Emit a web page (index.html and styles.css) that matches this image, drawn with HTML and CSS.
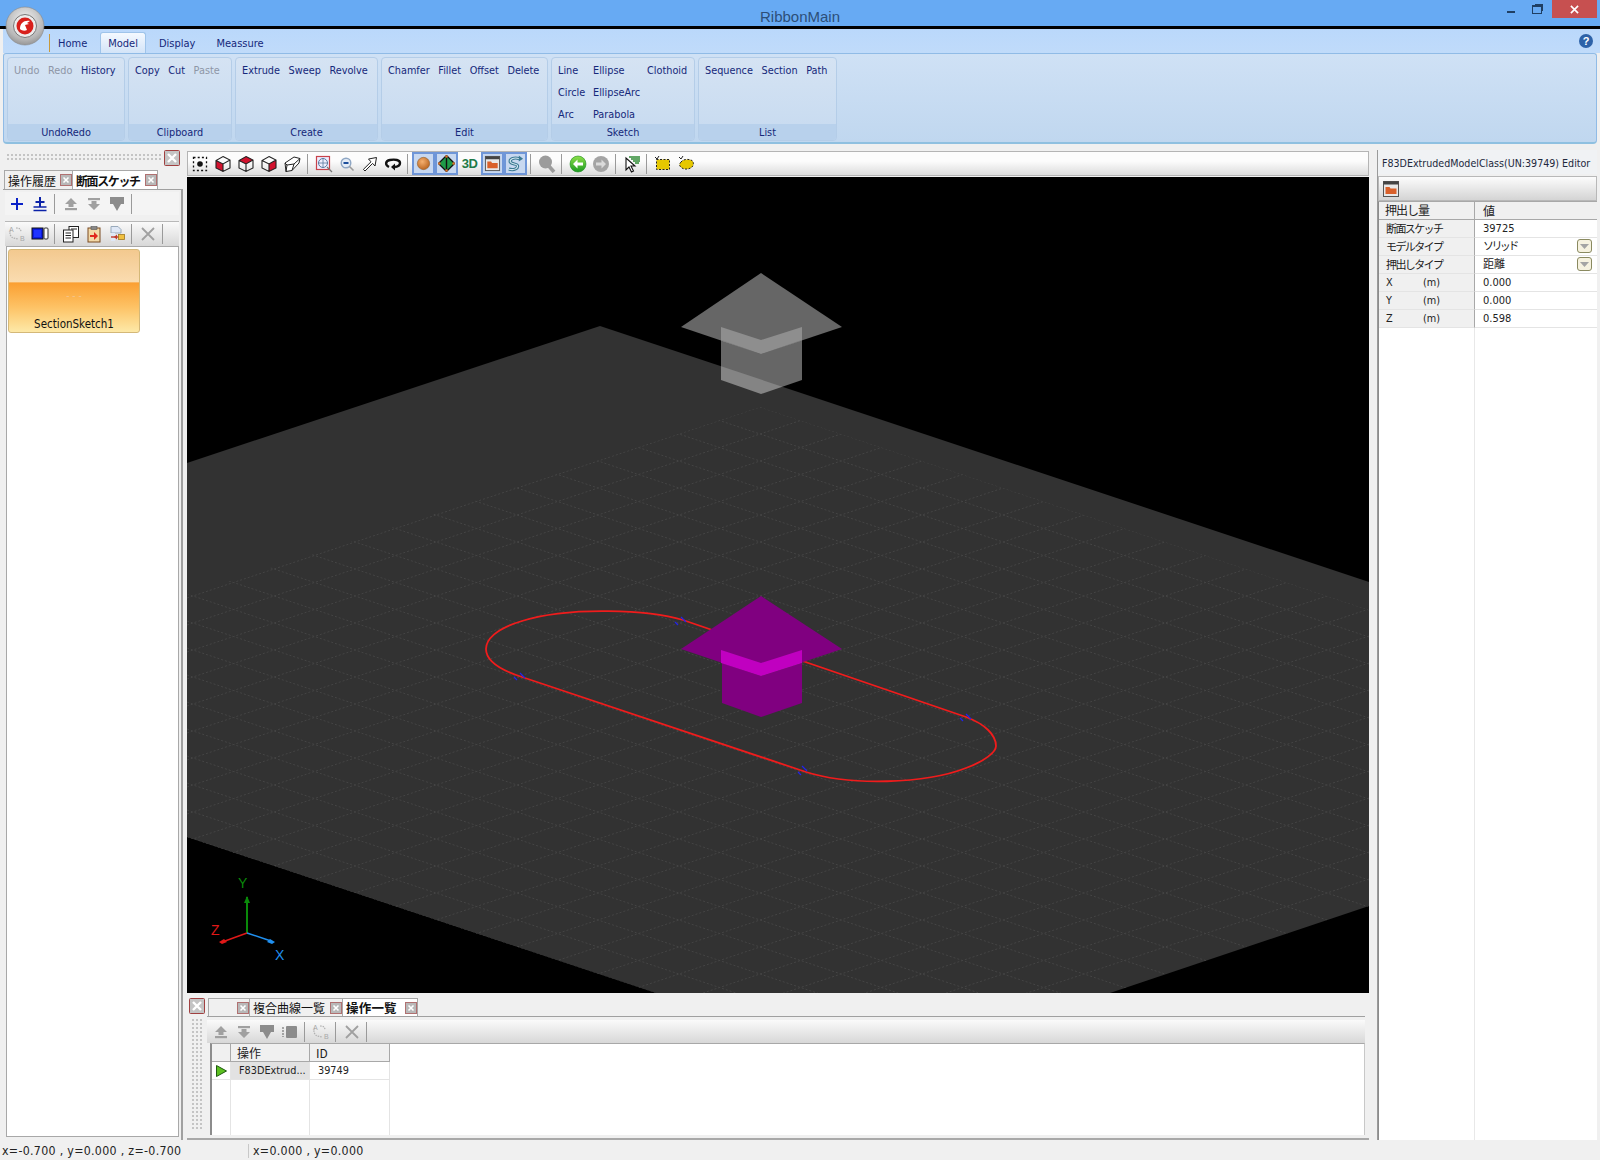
FILE: index.html
```html
<!DOCTYPE html>
<html lang="en">
<head>
  <meta charset="UTF-8" />
  <title>RibbonMain</title>
  <link rel="stylesheet" href="styles.css">
</head>
<body>
  <svg class="defs" xmlns="http://www.w3.org/2000/svg">
    <defs>
      <radialGradient id="ball" cx="0.4" cy="0.35" r="0.7"><stop offset="0" stop-color="#f5b070"/><stop offset="1" stop-color="#b8621c"/></radialGradient>
      <radialGradient id="chrome" cx="0.5" cy="0.35" r="0.7"><stop offset="0" stop-color="#f4f4f4"/><stop offset="0.7" stop-color="#b8b8b8"/><stop offset="1" stop-color="#8c8c8c"/></radialGradient>
      <linearGradient id="greenball" x1="0" y1="0" x2="0" y2="1"><stop offset="0" stop-color="#8ee04a"/><stop offset="1" stop-color="#1a9a20"/></linearGradient>
    </defs>
    <symbol id="i-select" viewBox="0 0 18 18"><rect x="2.5" y="2.5" width="13" height="13" fill="none" stroke="#111" stroke-width="1.3" stroke-dasharray="2 2.2"/><circle cx="9" cy="9" r="2.8" fill="#111"/></symbol>
    <symbol id="i-cube-l" viewBox="0 0 18 18"><path d="M2 5.5 9 9v7.5L2 13z" fill="#d2122e"/><path d="M9 1.5 16 5v8l-7 3.5L2 13V5.5zM2 5.5 9 9l7-4M9 9v7.5" fill="none" stroke="#222" stroke-width="1.1"/></symbol>
    <symbol id="i-cube-t" viewBox="0 0 18 18"><path d="M9 1.5 16 5 9 9 2 5.5z" fill="#d2122e"/><path d="M9 1.5 16 5v8l-7 3.5L2 13V5.5zM2 5.5 9 9l7-4M9 9v7.5" fill="none" stroke="#222" stroke-width="1.1"/></symbol>
    <symbol id="i-cube-r" viewBox="0 0 18 18"><path d="M16 5v8l-7 3.5V9z" fill="#d2122e"/><path d="M9 1.5 16 5v8l-7 3.5L2 13V5.5zM2 5.5 9 9l7-4M9 9v7.5" fill="none" stroke="#222" stroke-width="1.1"/></symbol>
    <symbol id="i-box" viewBox="0 0 18 18"><path d="M2 8 11 2l6 1.500-1 4.500-7 7.500-6 1z" fill="#fff" stroke="#222" stroke-width="1"/><path d="M2 8l2 2 7-1 6-5.500M4 10l-1 7M11 9l-2 6.500" fill="none" stroke="#222" stroke-width="1"/></symbol>
    <symbol id="i-zoombox" viewBox="0 0 18 18"><rect x="1.5" y="1.5" width="13" height="13" fill="#eef" stroke="#c8424a" stroke-width="1.2"/><circle cx="8" cy="8" r="4.5" fill="none" stroke="#5a7aa0"/><path d="M8 3v10M3 8h10" stroke="#5a7aa0" stroke-width=".8"/><path d="m12 12 5 5" stroke="#777" stroke-width="1.2"/></symbol>
    <symbol id="i-zoomout" viewBox="0 0 18 18"><circle cx="8" cy="8" r="4.8" fill="#e4ecf6" stroke="#8ea6c4" stroke-width="1.4"/><path d="M5.5 8h5" stroke="#1d4f9c" stroke-width="2"/><path d="m11.5 11.5 4 4" stroke="#9a9a9a" stroke-width="1.6"/></symbol>
    <symbol id="i-arrow" viewBox="0 0 18 18"><path d="M15.5 2.5 14 11l-2.4-2.6L4 16l-1.6-1.6L10 6.8 7.5 4z" fill="#fff" stroke="#222"/></symbol>
    <symbol id="i-rotate" viewBox="0 0 18 18"><path d="M5 12C1 10 1 6 6 5c5-1 10 0 10 3 0 2-2 3.500-5 4" fill="none" stroke="#111" stroke-width="2.400"/><path d="m11 8.500 0 7-4-3.500z" fill="#111"/></symbol>
    <symbol id="i-sphere" viewBox="0 0 18 18"><circle cx="9" cy="9" r="6.500" fill="url(#ball)" stroke="#8a5a2a" stroke-width=".6"/></symbol>
    <symbol id="i-diamond" viewBox="0 0 18 18"><path d="M9 .5 17.500 9 9 17.500.5 9z" fill="#1f9a48" stroke="#111" stroke-width="1.300"/><path d="M9 1v16" stroke="#111" stroke-width="1.500"/><circle cx="9" cy="1.500" r="1.300" fill="#e0742a"/><circle cx="16.500" cy="9" r="1.300" fill="#e0742a"/><circle cx="1.500" cy="9" r="1.300" fill="#e0742a"/><circle cx="9" cy="16.500" r="1.300" fill="#e0742a"/></symbol>
    <symbol id="i-folder" viewBox="0 0 18 18"><rect x="1.500" y="1.500" width="15" height="15" fill="#e8e8e8" stroke="#555"/><rect x="1.500" y="1.500" width="15" height="3" fill="#444"/><path d="M3.500 14V7h4l1 1.500h6V14z" fill="#d9602a"/></symbol>
    <symbol id="i-curve" viewBox="0 0 18 18"><path d="M2 15c6 1.500 10-1 9-4-.8-2-6-1-7.500-3.500C2.500 4 8 2 13 4" fill="none" stroke="#3c7a94" stroke-width="3.400"/><path d="M2 15c6 1.500 10-1 9-4-.8-2-6-1-7.500-3.500C2.500 4 8 2 13 4" fill="none" stroke="#d4e8f0" stroke-width="1.100"/><path d="m12.500 .5 4.500 3.500-4.500 3z" fill="#3c7a94"/></symbol>
    <symbol id="i-magnify" viewBox="0 0 18 18"><circle cx="7.500" cy="7" r="6.500" fill="#9c9c9c"/><path d="m10 10 6 7" stroke="#9c9c9c" stroke-width="3.600"/></symbol>
    <symbol id="i-back" viewBox="0 0 18 18"><circle cx="9" cy="9" r="8" fill="url(#greenball)" stroke="#1c8a20" stroke-width=".6"/><path d="M4 9l4.500-4.500V7.500H14v3H8.500v3z" fill="#fff"/></symbol>
    <symbol id="i-forward" viewBox="0 0 18 18"><circle cx="9" cy="9" r="8" fill="#a4a4a4"/><path d="M14 9 9.500 4.500V7.500H4v3h5.500v3z" fill="#dadada"/></symbol>
    <symbol id="i-cursor" viewBox="0 0 18 18"><path d="M3 3v12l3-3 2.500 5 2-1L8 11h4z" fill="#fff" stroke="#111" stroke-width="1.100"/><path d="M6 2h11M8 4h9M10 6h7M12 8h4" stroke="#2f8a34" stroke-width="1.300"/></symbol>
    <symbol id="i-rect" viewBox="0 0 18 18"><rect x="2.500" y="4.500" width="13" height="10" fill="#e6c800" stroke="#222" stroke-dasharray="2 1.500"/><path d="M1 2l2 2 2-3" fill="none" stroke="#222"/></symbol>
    <symbol id="i-blob" viewBox="0 0 18 18"><path d="M4 7c2-3 7-3 10-2s3 5 1 7-7 3-10 1-3-4-1-6z" fill="#e6c800" stroke="#222" stroke-dasharray="2 1.500"/><path d="M2 2l2 2 2-3" fill="none" stroke="#222"/></symbol>
    <symbol id="i-plus" viewBox="0 0 18 18"><path d="M9 3v12M3 9h12" stroke="#0b22c8" stroke-width="2"/></symbol>
    <symbol id="i-plusdown" viewBox="0 0 18 18"><path d="M9 2v10M4.500 7h9" stroke="#0b22a8" stroke-width="2"/><path d="M2.500 12h13M2.500 15.500h13" stroke="#0b22a8" stroke-width="1.600"/></symbol>
    <symbol id="i-up" viewBox="0 0 18 18"><path d="M9 3 15 9h-3.500v3h-5V9H3z" fill="#a0a0a0"/><rect x="3" y="13" width="12" height="2.200" fill="#a0a0a0"/></symbol>
    <symbol id="i-down" viewBox="0 0 18 18"><rect x="3" y="3" width="12" height="2.200" fill="#a0a0a0"/><path d="M9 15 15 9h-3.500V6h-5v3H3z" fill="#a0a0a0"/></symbol>
    <symbol id="i-bulk" viewBox="0 0 18 18"><path d="M2 2h14v7h-3l-4 7-4-7H2z" fill="#8c8c8c"/></symbol>
    <symbol id="i-stack" viewBox="0 0 18 18"><rect x="5" y="3" width="11" height="12" rx="1" fill="#8c8c8c"/><path d="M2 4v10" stroke="#8c8c8c" stroke-width="1.500" stroke-dasharray="2 1"/></symbol>
    <symbol id="i-bluebox" viewBox="0 0 18 18"><rect x="1" y="3" width="11" height="11" fill="#0c1ce0" stroke="#111"/><rect x="3" y="5" width="7" height="7" fill="#1f34ff"/><rect x="13" y="3" width="4" height="11" rx="1" fill="#fff" stroke="#333"/></symbol>
    <symbol id="i-copy" viewBox="0 0 18 18"><rect x="7" y="1.500" width="9.500" height="11" fill="#fff" stroke="#222"/><rect x="1.500" y="5" width="9.500" height="12" fill="#fff" stroke="#222"/><path d="M3.500 8h5.500M3.500 10.500h5.500M3.500 13h5.500M9 4h6" stroke="#222"/></symbol>
    <symbol id="i-paste" viewBox="0 0 18 18"><rect x="3" y="3" width="12" height="14" fill="#f2d9a8" stroke="#7a4a20"/><rect x="6" y="1.500" width="6" height="3" fill="#888" stroke="#555" stroke-width=".6"/><path d="M5 10h4V7l4 4-4 4v-3H5z" fill="#e0281e"/></symbol>
    <symbol id="i-pastefile" viewBox="0 0 18 18"><path d="M3 1.500h7l3 3V8H3z" fill="#dfe8f6" stroke="#9ab"/><rect x="3" y="8" width="4" height="8" fill="#dfe8f6"/><path d="M3 12h8" stroke="#c0392b" stroke-width="1.400"/><path d="M9 9.500 6 12l3 2.500" fill="#c0392b"/><rect x="10.500" y="9.500" width="6" height="5" fill="#f0c040" stroke="#a07820" stroke-width=".8"/></symbol>
    <symbol id="i-x" viewBox="0 0 18 18"><path d="M3 3 15 15M15 3 3 15" stroke="#a0a0a0" stroke-width="1.800"/></symbol>
    <symbol id="i-close" viewBox="0 0 16 16"><rect x=".5" y=".5" width="15" height="15" rx="1" fill="#c4c4c4" stroke="#a04040"/><path d="M4 4l8 8M12 4l-8 8" stroke="#fff" stroke-width="2.400"/></symbol>
    <symbol id="i-tabx" viewBox="0 0 12 12"><rect x=".5" y=".5" width="11" height="11" fill="#b8b8b8" stroke="#b07070"/><path d="M3.500 3.500l5 5M8.500 3.500l-5 5" stroke="#fff" stroke-width="1.600"/></symbol>
    <symbol id="i-play" viewBox="0 0 14 14"><path d="M2.500 1.500 12.500 7 2.500 12.500z" fill="#5cc020" stroke="#1e5a10"/></symbol>
    <symbol id="i-drop" viewBox="0 0 15 14"><rect x=".5" y=".5" width="14" height="13" rx="2.500" fill="#f6f2e0" stroke="#8a8a60"/><path d="M3 5h9L7.500 10z" fill="#a4a4a4"/></symbol>
    <symbol id="i-sort" viewBox="0 0 18 18"><path d="M3 5c-2 3-1 6 2 8l5 1M8 3c3 0 5 1 5 4" fill="none" stroke="#b0b0b0" stroke-width="1.200" stroke-dasharray="1.500 1"/></symbol>
  </svg>

  <header class="titlebar">
    <span class="title">RibbonMain</span>
    <div class="winbtns">
      <span class="win-min"></span>
      <span class="win-max"></span>
      <span class="win-close"><svg viewBox="0 0 10 10"><path d="M1 1l8 8M9 1 1 9" stroke="#fff" stroke-width="1.800"/></svg></span>
    </div>
  </header>
  <div class="logo"><svg viewBox="0 0 40 40"><circle cx="20" cy="20" r="19" fill="url(#chrome)" stroke="#888" stroke-width=".6"/><circle cx="20" cy="20" r="11.500" fill="#ececec" stroke="#777"/><circle cx="20" cy="20" r="8.500" fill="#d8201c"/><path d="M15 23c0-6 4-9 10-8l-3 2 2 1-4 1 2 5c-2 1-5 1-7-1z" fill="#fff"/></svg></div>

  <nav class="tabbar">
    <span class="tab-mark"></span>
    <span class="rtab">Home</span>
    <span class="rtab active">Model</span>
    <span class="rtab">Display</span>
    <span class="rtab">Meassure</span>
    <span class="help">?</span>
  </nav>

  <section class="ribbon">
    <div class="group g-undo">
      <div class="items"><span class="off">Undo</span><span class="off">Redo</span><span>History</span></div>
      <div class="caption">UndoRedo</div>
    </div>
    <div class="group g-clip">
      <div class="items"><span>Copy</span><span>Cut</span><span class="off">Paste</span></div>
      <div class="caption">Clipboard</div>
    </div>
    <div class="group g-create">
      <div class="items"><span>Extrude</span><span>Sweep</span><span>Revolve</span></div>
      <div class="caption">Create</div>
    </div>
    <div class="group g-edit">
      <div class="items"><span>Chamfer</span><span>Fillet</span><span>Offset</span><span>Delete</span></div>
      <div class="caption">Edit</div>
    </div>
    <div class="group g-sketch">
      <div class="items sketch-items">
        <span>Line</span><span>Ellipse</span><span>Clothoid</span>
        <span>Circle</span><span>EllipseArc</span><span></span>
        <span>Arc</span><span>Parabola</span><span></span>
      </div>
      <div class="caption">Sketch</div>
    </div>
    <div class="group g-list">
      <div class="items"><span>Sequence</span><span>Section</span><span>Path</span></div>
      <div class="caption">List</div>
    </div>
  </section>

  <div class="workspace">
    <aside class="left">
      <div class="left-head">
        <div class="gripper"></div>
        <svg class="close-btn"><use href="#i-close"/></svg>
      </div>
      <div class="dock-tabs">
        <span class="dock-tab t-hist">操作履歴<svg class="tabx"><use href="#i-tabx"/></svg></span>
        <span class="dock-tab active t-sect"><b>断面スケッチ</b><svg class="tabx"><use href="#i-tabx"/></svg></span>
      </div>
      <div class="left-body">
        <div class="toolbar plain">
          <button class="tb"><svg><use href="#i-plus"/></svg></button>
          <button class="tb"><svg><use href="#i-plusdown"/></svg></button>
          <i class="sep"></i>
          <button class="tb"><svg><use href="#i-up"/></svg></button>
          <button class="tb"><svg><use href="#i-down"/></svg></button>
          <button class="tb"><svg><use href="#i-bulk"/></svg></button>
          <i class="sep"></i>
        </div>
        <div class="toolbar second">
          <button class="tb"><svg viewBox="0 0 18 18"><use href="#i-sort"/><text x="1" y="7" class="sort-text">A</text><text x="12" y="16" class="sort-text">B</text></svg></button>
          <button class="tb"><svg><use href="#i-bluebox"/></svg></button>
          <i class="sep"></i>
          <button class="tb"><svg><use href="#i-copy"/></svg></button>
          <button class="tb"><svg><use href="#i-paste"/></svg></button>
          <button class="tb"><svg><use href="#i-pastefile"/></svg></button>
          <i class="sep"></i>
          <button class="tb"><svg><use href="#i-x"/></svg></button>
          <i class="sep"></i>
        </div>
        <div class="sketch-list">
          <div class="sketch-card">
            <span class="card-dash">- - -</span>
            <span class="card-name">SectionSketch1</span>
          </div>
        </div>
      </div>
    </aside>

    <main class="center">
      <div class="toolbar view-tools">
        <button class="tb"><svg><use href="#i-select"/></svg></button>
        <button class="tb"><svg><use href="#i-cube-l"/></svg></button>
        <button class="tb"><svg><use href="#i-cube-t"/></svg></button>
        <button class="tb"><svg><use href="#i-cube-r"/></svg></button>
        <button class="tb"><svg><use href="#i-box"/></svg></button>
        <i class="sep"></i>
        <button class="tb"><svg><use href="#i-zoombox"/></svg></button>
        <button class="tb"><svg><use href="#i-zoomout"/></svg></button>
        <button class="tb"><svg><use href="#i-arrow"/></svg></button>
        <button class="tb"><svg><use href="#i-rotate"/></svg></button>
        <i class="sep"></i>
        <button class="tb on"><svg><use href="#i-sphere"/></svg></button>
        <button class="tb on"><svg><use href="#i-diamond"/></svg></button>
        <button class="tb"><span class="threed">3D</span></button>
        <button class="tb on"><svg><use href="#i-folder"/></svg></button>
        <button class="tb on"><svg><use href="#i-curve"/></svg></button>
        <i class="sep"></i>
        <button class="tb"><svg><use href="#i-magnify"/></svg></button>
        <i class="sep"></i>
        <button class="tb"><svg><use href="#i-back"/></svg></button>
        <button class="tb"><svg><use href="#i-forward"/></svg></button>
        <i class="sep"></i>
        <button class="tb"><svg><use href="#i-cursor"/></svg></button>
        <i class="sep"></i>
        <button class="tb"><svg><use href="#i-rect"/></svg></button>
        <button class="tb"><svg><use href="#i-blob"/></svg></button>
      </div>

      <svg class="viewport" viewBox="187 177 1182 816" xmlns="http://www.w3.org/2000/svg">
        <clipPath id="gridclip"><polygon points="760,407 1369,610 1369,906 1110,993 656,993 187,837 187,595"/></clipPath>
        <rect x="187" y="177" width="1182" height="816" fill="#000"/>
        <polygon points="600,326 1369,582 1369,906 1110,993 656,993 187,837 187,463" fill="#323232"/>
        <g clip-path="url(#gridclip)" fill="none" stroke="#444" stroke-width="1" stroke-dasharray="2 2">
          <path d="M187 216l1182 394m-1182-367l1182 394m-1182-367l1182 394m-1182-367l1182 394m-1182-367l1182 394m-1182-367l1182 394m-1182-367l1182 394m-1182-367l1182 394m-1182-367l1182 394m-1182-367l1182 394m-1182-367l1182 394m-1182-367l1182 394m-1182-367l1182 394m-1182-367l1182 394m-1182-367l1182 394m-1182-367l1182 394m-1182-367l1182 394m-1182-367l1182 394m-1182-367l1182 394m-1182-367l1182 394m-1182-367l1182 394m-1182-367l1182 394m-1182-367l1182 394m-1182-367l1182 394m-1182-367l1182 394m-1182-367l1182 394m-1182-367l1182 394m-1182-367l1182 394m-1182-367l1182 394"/>
          <path d="M187 598l1182-394m-1182 421l1182-394m-1182 421l1182-394m-1182 421l1182-394m-1182 421l1182-394m-1182 421l1182-394m-1182 421l1182-394m-1182 421l1182-394m-1182 421l1182-394m-1182 421l1182-394m-1182 421l1182-394m-1182 421l1182-394m-1182 421l1182-394m-1182 421l1182-394m-1182 421l1182-394m-1182 421l1182-394m-1182 421l1182-394m-1182 421l1182-394m-1182 421l1182-394m-1182 421l1182-394m-1182 421l1182-394m-1182 421l1182-394m-1182 421l1182-394m-1182 421l1182-394m-1182 421l1182-394m-1182 421l1182-394"/>
        </g>

        <!-- ghost of the extruded shape -->
        <polygon points="761,273 842,327 761,354 681,327" fill="#fff" fill-opacity=".4"/>
        <polygon points="721,340 761,354 802,340 802,380 761,394 721,380" fill="#fff" fill-opacity=".4"/>
        <polygon points="721,327 761,340 802,327 802,340 761,354 721,340" fill="#8e8e8e"/>

        <!-- section sketch outline -->
        <path d="M683 620C650 610 570 606 522 621C495 629 486 640 486 649C486 660 497 669 522 677L806 772C850 786 925 784 966 768C985 761 996 752 996 746C996 735 985 724 966 717Z" fill="none" stroke="#f01c1c" stroke-width="1.800"/>
        <g stroke="#2222ee" stroke-width="1.200">
          <path d="M681 617l5 5M675 622l3 3"/>
          <path d="M520 673l5 5M514 677l3 3"/>
          <path d="M802 766l5 5M798 772l3 3"/>
          <path d="M966 714l5 5M960 718l3 3"/>
        </g>

        <!-- extruded shape -->
        <polygon points="761,596 842,649 761,676 681,649" fill="#800080"/>
        <polygon points="722,663 761,676 802,663 802,703 761,717 722,703" fill="#800080"/>
        <polygon points="721,650 761,663 802,650 802,663 761,676 721,663" fill="#c000c0"/>

        <!-- axes -->
        <path d="M247 933V897" stroke="#0a8a0a" stroke-width="2"/>
        <path d="M247 896l-3 7h6z" fill="#0a8a0a"/>
        <path d="M247 933l-22 8" stroke="#e01818" stroke-width="1.500"/>
        <path d="M219 942l5-3 3 3-5 2z" fill="#e01818"/>
        <path d="M247 933l24 8" stroke="#2090f0" stroke-width="1.500"/>
        <path d="M275 942l-5-3-3 3 5 2z" fill="#2090f0"/>
        <text x="238" y="888" class="axis ax-y">Y</text>
        <text x="211" y="935" class="axis ax-z">Z</text>
        <text x="275" y="960" class="axis ax-x">X</text>
      </svg>

      <div class="bottom">
        <div class="bottom-side">
          <svg class="close-btn"><use href="#i-close"/></svg>
          <div class="gripper tall"></div>
        </div>
        <div class="bottom-main">
          <div class="dock-tabs small">
            <span class="dock-tab t-blank"><svg class="tabx"><use href="#i-tabx"/></svg></span>
            <span class="dock-tab t-curve">複合曲線一覧<svg class="tabx"><use href="#i-tabx"/></svg></span>
            <span class="dock-tab active t-ops"><b>操作一覧</b><svg class="tabx"><use href="#i-tabx"/></svg></span>
          </div>
          <div class="ops-body">
            <div class="toolbar second">
              <button class="tb"><svg><use href="#i-up"/></svg></button>
              <button class="tb"><svg><use href="#i-down"/></svg></button>
              <button class="tb"><svg><use href="#i-bulk"/></svg></button>
              <button class="tb"><svg><use href="#i-stack"/></svg></button>
              <i class="sep"></i>
              <button class="tb"><svg viewBox="0 0 18 18"><use href="#i-sort"/><text x="1" y="7" class="sort-text">A</text><text x="12" y="16" class="sort-text">B</text></svg></button>
              <i class="sep"></i>
              <button class="tb"><svg><use href="#i-x"/></svg></button>
              <i class="sep"></i>
            </div>
            <div class="ops-table">
              <div class="ops-row head"><span class="c-mark"></span><span class="c-name">操作</span><span class="c-id">ID</span></div>
              <div class="ops-row"><span class="c-mark"><svg class="play"><use href="#i-play"/></svg></span><span class="c-name cell-gray">F83DExtrud...</span><span class="c-id">39749</span></div>
              <div class="ops-row fill"><span class="c-mark"></span><span class="c-name"></span><span class="c-id"></span></div>
            </div>
          </div>
        </div>
      </div>
    </main>

    <aside class="right">
      <div class="editor-head">F83DExtrudedModelClass(UN:39749) Editor</div>
      <div class="toolbar editor-tools">
        <button class="tb"><svg><use href="#i-folder"/></svg></button>
      </div>
      <div class="props">
        <div class="prop head"><span class="key">押出し量</span><span class="val">値</span></div>
        <div class="prop"><span class="key">断面スケッチ</span><span class="val">39725</span></div>
        <div class="prop"><span class="key">モデルタイプ</span><span class="val"><em>ソリッド</em><svg class="drop"><use href="#i-drop"/></svg></span></div>
        <div class="prop"><span class="key">押出しタイプ</span><span class="val jp">距離<svg class="drop"><use href="#i-drop"/></svg></span></div>
        <div class="prop"><span class="key axis-key"><u>X</u><u>(m)</u></span><span class="val">0.000</span></div>
        <div class="prop"><span class="key axis-key"><u>Y</u><u>(m)</u></span><span class="val">0.000</span></div>
        <div class="prop"><span class="key axis-key"><u>Z</u><u>(m)</u></span><span class="val">0.598</span></div>
        <div class="prop fill"><span class="key"></span><span class="val"></span></div>
      </div>
    </aside>
  </div>

  <footer class="status">
    <span class="status-left">x=-0.700 , y=0.000 , z=-0.700</span>
    <span class="status-right">x=0.000 , y=0.000</span>
  </footer>
</body>
</html>
```

FILE: styles.css
```css
* {
  box-sizing: border-box;
}

html, body {
  margin: 0;
  height: 100%;
}

body {
  width: 1600px;
  height: 1160px;
  overflow: hidden;
  display: flex;
  flex-direction: column;
  position: relative;
  background-color: #f0f0f0;
  font-family: "DejaVu Sans", "Noto Sans CJK JP", sans-serif;
  font-stretch: condensed;
  font-size: 10.8px;
  color: #222;
}

.defs {
  display: block;
  width: 0;
  height: 0;
}

/* title bar */
.titlebar {
  height: 29px;
  flex: none;
  display: flex;
  justify-content: center;
  align-items: center;
  position: relative;
  background-color: #67aaf3;
  border-bottom: 3px solid #000;
}

.title {
  font-family: "Liberation Sans", sans-serif;
  font-stretch: normal;
  font-size: 15px;
  color: #2c4f78;
  padding-top: 6px;
}

.winbtns {
  position: absolute;
  top: 0;
  right: 3px;
  display: flex;
  height: 18px;
}

.win-min {
  width: 8px;
  height: 2px;
  margin: 11px 17px 0 0;
  background-color: #1f3f63;
}

.win-max {
  width: 10px;
  height: 9px;
  margin: 5px 10px 0 0;
  border: 1px solid #1f3f63;
  border-top-width: 2px;
  box-shadow: 2px -2px 0 -1px #1f3f63;
}

.win-close {
  width: 45px;
  height: 18px;
  background-color: #c75050;
  display: flex;
  align-items: center;
  justify-content: center;
}

.win-close svg {
  width: 9px;
  height: 9px;
}

.logo {
  position: absolute;
  top: 6px;
  left: 5px;
  width: 40px;
  height: 40px;
  z-index: 5;
}

.logo svg {
  width: 40px;
  height: 40px;
  display: block;
}

/* ribbon tabs */
.tabbar {
  height: 24px;
  flex: none;
  display: flex;
  align-items: flex-end;
  gap: 7px;
  margin-left: 3px;
  padding-left: 46px;
  background: linear-gradient(#bad8fb, #c0dbfa);
  color: #15287a;
  position: relative;
}

.tab-mark {
  width: 1px;
  height: 18px;
  margin: 0 -6px 1px 0;
  background-color: #c89a3c;
}

.rtab {
  height: 21px;
  padding: 5px 7px 0;
  font-size: 11px;
}

.rtab.active {
  background: linear-gradient(#f4f9ff, #d3e4f8);
  border: 1px solid #9fc4ea;
  border-bottom: none;
  border-radius: 3px 3px 0 0;
  padding: 4px 7px 0;
  margin: 0 -1px;
}

.help {
  position: absolute;
  top: 5px;
  right: 7px;
  width: 14px;
  height: 14px;
  border-radius: 50%;
  background-color: #2d62a8;
  color: #fff;
  font-family: "Liberation Sans", sans-serif;
  font-weight: bold;
  font-size: 11px;
  line-height: 14px;
  text-align: center;
}

.ribbon {
  height: 91px;
  flex: none;
  margin-left: 3px;
  margin-right: 3px;
  display: flex;
  gap: 3px;
  padding: 3px;
  background: linear-gradient(#cfe1f5, #c0d7ef);
  border: 1px solid #90bbe6;
  border-bottom: 2px solid #8fc0e0;
  border-radius: 3px 3px 4px 4px;
}

.group {
  display: flex;
  flex-direction: column;
  height: 84px;
  border: 1px solid #b4cde8;
  border-radius: 4px;
  background: linear-gradient(#d5e3f3, #c6daf0);
  overflow: hidden;
}

.g-undo { width: 118px; }
.g-clip { width: 104px; }
.g-create { width: 143px; }
.g-edit { width: 167px; }
.g-sketch { width: 144px; }
.g-list { width: 139px; }

.items {
  height: 66px;
  flex: none;
  display: flex;
  gap: 8.600px;
  padding: 6px 6px 0;
  color: #15287a;
  line-height: 13px;
  white-space: nowrap;
}

.items .off {
  color: #8e96a6;
}

.sketch-items {
  display: grid;
  grid-template-columns: 35px 54px auto;
  grid-auto-rows: 22px;
  gap: 0;
}

.caption {
  height: 16px;
  flex: none;
  background-color: #b8d1ec;
  color: #15287a;
  text-align: center;
  line-height: 17px;
}

/* main area */
.workspace {
  flex: 1;
  display: flex;
  min-height: 0;
  padding: 6px 0 1px 3px;
}

.left {
  width: 180px;
  flex: none;
  display: flex;
  flex-direction: column;
}

.left-head {
  height: 18px;
  flex: none;
  display: flex;
  padding-left: 3px;
  justify-content: space-between;
  padding-right: 3px;
}

.gripper {
  width: 157px;
  height: 7px;
  margin-top: 3px;
  background-image: radial-gradient(#c4c4c4 1px, transparent 1px);
  background-size: 4px 4px;
}

.gripper.tall {
  flex: 1;
  width: 13px;
  height: auto;
  margin: 4px 0 5px 2px;
}

.close-btn {
  width: 16px;
  height: 16px;
  flex: none;
}

.dock-tabs {
  display: flex;
  height: 19px;
  flex: none;
  margin-top: 2px;
  font-family: "Noto Sans CJK JP", sans-serif;
  font-size: 12px;
  color: #111;
}

.dock-tab {
  display: flex;
  align-items: center;
  justify-content: space-between;
  height: 19px;
  padding: 0 0 0 3px;
  border: 1px solid #a8a8a8;
  border-bottom: none;
  white-space: nowrap;
}

.dock-tab.active {
  background-color: #fff;
  border-left: none;
}

.dock-tab.active b {
  letter-spacing: -1.4px;
}

.t-hist { width: 69px; margin-left: 1px; }
.t-sect { width: 85px; }
.t-blank { width: 42px; justify-content: flex-end; }
.t-curve { width: 93px; border-left: none; }
.t-ops { width: 75px; }

.dock-tab.t-ops b {
  font-size: 12.500px;
  letter-spacing: .2px;
}

.tabx {
  width: 12px;
  height: 12px;
  flex: none;
}

.left-body {
  flex: 1;
  display: flex;
  flex-direction: column;
  min-height: 0;
  padding: 2px 2px 3px 2px;
  border: 1px solid #a0a0a0;
  border-width: 1px 2px 0 0;
  background-color: #f0f0f0;
}

.toolbar {
  display: flex;
  align-items: center;
  flex: none;
  height: 24px;
}

.toolbar.plain {
  height: 23px;
  background-color: #f4f4f4;
  border-bottom: 0;
}

.toolbar.second {
  height: 25px;
  margin-top: 6px;
  border-top: 1px solid #b8b8b8;
  background: linear-gradient(#fafafa, #d8d8d8);
}

.tb {
  width: 23px;
  height: 23px;
  flex: none;
  padding: 0;
  border: none;
  background: none;
  display: flex;
  align-items: center;
  justify-content: center;
}

.tb svg {
  width: 18px;
  height: 18px;
  display: block;
}

.tb.on {
  background-color: #c8d8f0;
  border: 2px solid #6f96d8;
}

.tb.on svg {
  width: 17px;
  height: 17px;
}

.sep {
  width: 1px;
  height: 20px;
  flex: none;
  margin: 0 4px 0 3px;
  background-color: #9a9a9a;
}

.threed {
  font-family: "Liberation Sans", sans-serif;
  font-stretch: normal;
  font-weight: bold;
  font-size: 13px;
  letter-spacing: -.5px;
  color: #1f7a48;
}

.sort-text {
  font-family: "Liberation Sans", sans-serif;
  font-stretch: normal;
  font-size: 7px;
  fill: #a8a8a8;
}

.sketch-list {
  flex: 1;
  min-height: 0;
  margin-left: 1px;
  padding: 2px 0 0 1px;
  background-color: #fff;
  border: 1px solid #a8a8a8;
}

.sketch-card {
  width: 132px;
  height: 84px;
  display: flex;
  flex-direction: column;
  align-items: center;
  justify-content: flex-end;
  border: 1px solid #d4b878;
  border-radius: 3px;
  background: linear-gradient(#f3c98f 0%, #fadcb0 39%, #fb9f32 40%, #fdc366 70%, #fde9a8 100%);
  color: #111;
}

.card-dash {
  color: #f4c58c;
  font-size: 10px;
  margin-bottom: 16px;
}

.card-name {
  font-size: 11.500px;
  margin-bottom: 1px;
}

.center {
  width: 1182px;
  flex: none;
  margin-left: 4px;
  display: flex;
  flex-direction: column;
}

.view-tools {
  height: 25px;
  margin-top: 1px;
  border: 1px solid #b4b4b4;
  background: linear-gradient(#fcfcfc 40%, #dcdcdc);
}

.view-tools .sep:first-of-type {
  margin-left: 4px;
}

.viewport {
  display: block;
  width: 1182px;
  height: 816px;
  flex: none;
  margin-top: 1px;
}

.axis {
  font-family: "Liberation Sans", sans-serif;
  font-stretch: normal;
  font-size: 14px;
}

.ax-y { fill: #0a8a0a; }
.ax-z { fill: #e01818; }
.ax-x { fill: #2090f0; }

.bottom {
  flex: 1;
  display: flex;
  min-height: 0;
  padding: 5px 4px 3px 2px;
  border-bottom: 2px solid #a8a8a8;
}

.bottom-side {
  width: 18px;
  flex: none;
  display: flex;
  flex-direction: column;
}

.bottom-main {
  flex: 1;
  display: flex;
  flex-direction: column;
  min-width: 0;
}

.dock-tabs.small {
  height: 18px;
  margin: 0 0 0 1px;
}

.dock-tabs.small .dock-tab {
  height: 18px;
}

.ops-body {
  flex: 1;
  display: flex;
  flex-direction: column;
  min-height: 0;
  border-top: 1px solid #a0a0a0;
}

.ops-body .toolbar.second {
  height: 23px;
  margin-top: 3px;
  padding-left: 2px;
  border-top: none;
}

.ops-table {
  flex: 1;
  display: flex;
  flex-direction: column;
  min-height: 0;
  margin-left: 3px;
  background-color: #fff;
  border-left: 2px solid #8c8c8c;
  border-top: 1px solid #a8a8a8;
  border-right: 1px solid #c8c8c8;
}

.ops-row {
  display: flex;
  height: 18px;
  flex: none;
}

.ops-row.fill {
  flex: 1;
}

.ops-row span {
  display: flex;
  align-items: center;
  border-right: 1px solid #e4e4e4;
  border-bottom: 1px solid #e4e4e4;
}

.ops-row.fill span {
  border-bottom: none;
}

.ops-row.head {
  height: 18px;
  font-family: "Noto Sans CJK JP", sans-serif;
  font-size: 12px;
}

.ops-row.head span {
  background-color: #f0f0f0;
  border-color: #a8a8a8;
}

.c-mark {
  width: 19px;
  justify-content: center;
}

.c-name {
  width: 79px;
  padding-left: 6px;
}

.c-id {
  width: 80px;
  padding-left: 8px;
}

.ops-row.head .c-id {
  padding-left: 6px;
}

.ops-row .cell-gray {
  background-color: #e2e2e2;
  padding-left: 8px;
}

.play {
  width: 14px;
  height: 14px;
}

.right {
  flex: 1;
  display: flex;
  flex-direction: column;
  min-width: 0;
  margin-left: 8px;
  margin-right: 3px;
  border-left: 1px solid #9a9a9a;
}

.editor-head {
  height: 24px;
  flex: none;
  padding: 7px 0 0 4px;
  background-color: #f0f2f4;
  color: #22283c;
  font-size: 10.600px;
  white-space: nowrap;
}

.editor-tools {
  height: 25px;
  margin-top: 2px;
  border: 1px solid #b8b8b8;
  background: linear-gradient(#fcfcfc, #d4d4d4);
}

.props {
  flex: 1;
  display: flex;
  flex-direction: column;
  min-height: 0;
  background-color: #fff;
  border-left: 1px solid #8c8c8c;
  border-top: 1px solid #a8a8a8;
  font-size: 11px;
}

.prop {
  display: flex;
  height: 18px;
  flex: none;
}

.prop.fill {
  flex: 1;
}

.prop span {
  display: flex;
  align-items: center;
  border-bottom: 1px solid #e4e4e4;
}

.prop.fill span {
  border-bottom: none;
}

.key {
  width: 96px;
  padding: 0 0 2px 7px;
  background-color: #f0f0f0;
  border-right: 1px solid #a8a8a8;
  font-family: "Noto Sans CJK JP", sans-serif;
  font-size: 11px;
  letter-spacing: -1.600px;
  white-space: nowrap;
}

.prop.fill .key {
  background-color: #fff;
  border-right-color: #e8e8e8;
}

.prop .axis-key {
  padding-bottom: 0;
  font-family: "DejaVu Sans", sans-serif;
  font-size: 10.800px;
  letter-spacing: 0;
}

.axis-key u {
  text-decoration: none;
  width: 37px;
}

.val {
  flex: 1;
  padding-left: 8px;
  position: relative;
  font-family: "DejaVu Sans", "Noto Sans CJK JP", sans-serif;
}

.val em {
  font-style: normal;
  letter-spacing: -2.600px;
  font-family: "Noto Sans CJK JP", sans-serif;
  padding-bottom: 3px;
}

.val.jp {
  padding-bottom: 3px;
}

.prop.head .key {
  font-size: 12px;
  letter-spacing: -1px;
  padding-left: 6px;
}

.prop.head span {
  background-color: #f0f0f0;
  border-color: #a8a8a8;
  font-family: "Noto Sans CJK JP", sans-serif;
  font-size: 12px;
}

.drop {
  position: absolute;
  right: 5px;
  top: 1px;
  width: 15px;
  height: 14px;
}

.status {
  height: 19px;
  flex: none;
  display: flex;
  align-items: center;
  font-size: 12.300px;
  letter-spacing: .3px;
  white-space: nowrap;
}

.status-left {
  width: 249px;
  padding-left: 2px;
  border-right: 1px solid #c8c8c8;
}

.status-right {
  padding-left: 4px;
}
```
